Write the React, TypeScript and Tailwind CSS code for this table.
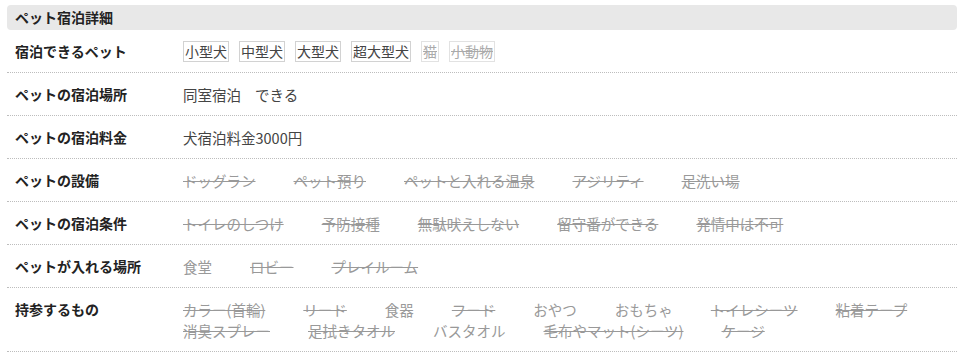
/**
 * ペット宿泊詳細 table
 */

const font = '"Noto Sans CJK JP", "Noto Sans", sans-serif';

type Item = { label: string; ok: boolean };

const petTypes: Item[] = [
  { label: '小型犬', ok: true },
  { label: '中型犬', ok: true },
  { label: '大型犬', ok: true },
  { label: '超大型犬', ok: true },
  { label: '猫', ok: false },
  { label: '小動物', ok: false },
];

const strikeRows: { title: string; items: string[] }[] = [
  { title: 'ペットの設備', items: ['ドッグラン', 'ペット預り', 'ペットと入れる温泉', 'アジリティ', '足洗い場'] },
  { title: 'ペットの宿泊条件', items: ['トイレのしつけ', '予防接種', '無駄吠えしない', '留守番ができる', '発情中は不可'] },
];

const places: Item[] = [
  { label: '食堂', ok: true },
  { label: 'ロビー', ok: false },
  { label: 'プレイルーム', ok: false },
];

const bring = [
  'カラー(首輪)',
  'リード',
  '食器',
  'フード',
  'おやつ',
  'おもちゃ',
  'トイレシーツ',
  '粘着テープ',
  '消臭スプレー',
  '足拭きタオル',
  'バスタオル',
  '毛布やマット(シーツ)',
  'ケージ',
];

// items available (no strike) in 持参するもの
const bringOk = ['食器', 'おやつ', 'おもちゃ', 'バスタオル'];

function Row({ title, children }: { title: string; children: React.ReactNode }) {
  return (
    <div className="flex items-start border-b border-dotted border-[#bdbdbd] pt-[11px] pb-[10px]">
      <div className="w-[176px] shrink-0 pl-2 text-[14px] leading-[21px] font-bold text-[#222]">{title}</div>
      <div className="flex-1 text-[14.5px] leading-[21px] text-[#444]">{children}</div>
    </div>
  );
}

function Plain({ items }: { items: Item[] }) {
  return (
    <div className="flex flex-wrap">
      {items.map((it) => (
        <span
          key={it.label}
          className={it.ok ? 'mr-[38px] text-[#999]' : 'mr-[38px] text-[#999] line-through'}
        >
          {it.label}
        </span>
      ))}
    </div>
  );
}

export default function App() {
  return (
    <div className="bg-white pt-[5px] pr-[18px] pl-[7px]" style={{ fontFamily: font }}>
      <div className="flex h-[25px] items-center rounded bg-[#e8e8e8] px-2 text-[14px] font-bold text-[#222]">
        ペット宿泊詳細
      </div>

      <Row title="宿泊できるペット">
        <div className="flex text-[14px]">
          {petTypes.map((p) => (
            <span
              key={p.label}
              className={
                p.ok
                  ? 'mr-[10px] border border-[#d2d2d2] px-px leading-[19px] text-[#444]'
                  : 'mr-[10px] border border-[#e2e2e2] px-px leading-[19px] text-[#aaa] line-through'
              }
            >
              {p.label}
            </span>
          ))}
        </div>
      </Row>

      <Row title="ペットの宿泊場所">
        <span>同室宿泊</span>
        <span className="ml-[14px]">できる</span>
      </Row>

      <Row title="ペットの宿泊料金">犬宿泊料金3000円</Row>

      {strikeRows.map((r) => (
        <Row key={r.title} title={r.title}>
          <Plain items={r.items.map((label) => ({ label, ok: false }))} />
        </Row>
      ))}

      <Row title="ペットが入れる場所">
        <Plain items={places} />
      </Row>

      <Row title="持参するもの">
        <Plain items={bring.map((label) => ({ label, ok: bringOk.includes(label) }))} />
      </Row>
    </div>
  );
}
